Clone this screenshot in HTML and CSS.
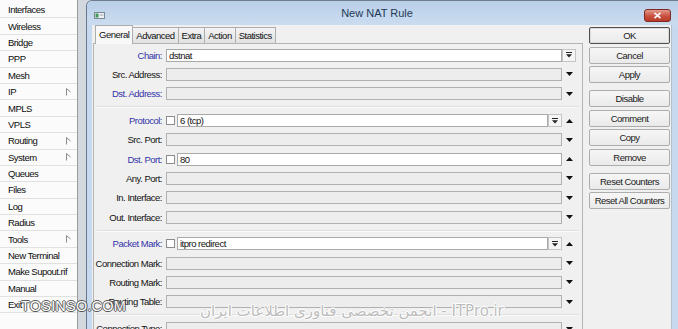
FILE: index.html
```html
<!DOCTYPE html>
<html lang="en">
<head>
<meta charset="utf-8">
<title>New NAT Rule</title>
<link rel="stylesheet" href="styles.css">
</head>
<body>
<div class="screen">
  <nav class="sidebar">
    <div class="mi">Interfaces</div>
    <div class="mi">Wireless</div>
    <div class="mi">Bridge</div>
    <div class="mi">PPP</div>
    <div class="mi">Mesh</div>
    <div class="mi">IP<svg class="subarrow" viewBox="0 0 5 8"><path d="M0.5 0.5 L0.5 7.5 M0.5 0.5 L4.5 4" fill="none" stroke="#8a8a8a" stroke-width="1"/></svg></div>
    <div class="mi">MPLS</div>
    <div class="mi">VPLS</div>
    <div class="mi">Routing<svg class="subarrow" viewBox="0 0 5 8"><path d="M0.5 0.5 L0.5 7.5 M0.5 0.5 L4.5 4" fill="none" stroke="#8a8a8a" stroke-width="1"/></svg></div>
    <div class="mi">System<svg class="subarrow" viewBox="0 0 5 8"><path d="M0.5 0.5 L0.5 7.5 M0.5 0.5 L4.5 4" fill="none" stroke="#8a8a8a" stroke-width="1"/></svg></div>
    <div class="mi">Queues</div>
    <div class="mi">Files</div>
    <div class="mi">Log</div>
    <div class="mi">Radius</div>
    <div class="mi">Tools<svg class="subarrow" viewBox="0 0 5 8"><path d="M0.5 0.5 L0.5 7.5 M0.5 0.5 L4.5 4" fill="none" stroke="#8a8a8a" stroke-width="1"/></svg></div>
    <div class="mi">New Terminal</div>
    <div class="mi">Make Supout.rif</div>
    <div class="mi">Manual</div>
    <div class="mi">Exit</div>
  </nav>
  <div class="backdrop"></div>
  <div class="window">
    <div class="titlebar">
      <div class="tleft">
        <svg class="appicon" viewBox="0 0 11 7"><rect x="0.5" y="0.5" width="10" height="6" fill="#eef1f3" stroke="#7d8a96"/><rect x="1.5" y="1.5" width="3" height="4" fill="#3f9a5c"/><rect x="5.5" y="2.5" width="4" height="1" fill="#9aa6b0"/></svg>
      </div>
      <div class="title">New NAT Rule</div>
      <div class="tright">
        <div class="close"><svg viewBox="0 0 9 7" class="closex"><path d="M1.5 0.8 L7.5 6.2 M7.5 0.8 L1.5 6.2" stroke="#fff" stroke-width="1.6" fill="none"/></svg></div>
      </div>
    </div>
    <div class="client">
      <div class="main">
        <div class="tabs">
          <div class="tab active">General</div>
          <div class="tab">Advanced</div>
          <div class="tab">Extra</div>
          <div class="tab">Action</div>
          <div class="tab">Statistics</div>
        </div>
        <div class="page">
          <div class="row">
            <div class="lbl key">Chain:</div>
            <div class="field"><div class="inp filled">dstnat</div></div>
            <div class="trail"><div class="dd"><svg class="ddi" viewBox="0 0 6 6"><rect x="0" y="0" width="6" height="1" fill="#222"/><path d="M0 2.2 L6 2.2 L3 5.6 Z" fill="#222"/></svg></div></div>
          </div>
          <div class="row">
            <div class="lbl">Src. Address:</div>
            <div class="field"><div class="inp"></div></div>
            <div class="trail"><svg class="arr" viewBox="0 0 7 4"><path d="M0 0 L7 0 L3.5 4 Z" fill="#111"/></svg></div>
          </div>
          <div class="row">
            <div class="lbl key">Dst. Address:</div>
            <div class="field"><div class="inp"></div></div>
            <div class="trail"><svg class="arr" viewBox="0 0 7 4"><path d="M0 0 L7 0 L3.5 4 Z" fill="#111"/></svg></div>
          </div>

          <div class="sep"></div>

          <div class="row">
            <div class="lbl key">Protocol:</div>
            <div class="field"><div class="chk"></div><div class="inp filled">6 (tcp)</div><div class="dd"><svg class="ddi" viewBox="0 0 6 6"><rect x="0" y="0" width="6" height="1" fill="#222"/><path d="M0 2.2 L6 2.2 L3 5.6 Z" fill="#222"/></svg></div></div>
            <div class="trail"><svg class="arr" viewBox="0 0 7 4"><path d="M0 4 L7 4 L3.5 0 Z" fill="#111"/></svg></div>
          </div>
          <div class="row">
            <div class="lbl">Src. Port:</div>
            <div class="field"><div class="inp"></div></div>
            <div class="trail"><svg class="arr" viewBox="0 0 7 4"><path d="M0 0 L7 0 L3.5 4 Z" fill="#111"/></svg></div>
          </div>
          <div class="row">
            <div class="lbl key">Dst. Port:</div>
            <div class="field"><div class="chk"></div><div class="inp filled">80</div></div>
            <div class="trail"><svg class="arr" viewBox="0 0 7 4"><path d="M0 4 L7 4 L3.5 0 Z" fill="#111"/></svg></div>
          </div>
          <div class="row">
            <div class="lbl">Any. Port:</div>
            <div class="field"><div class="inp"></div></div>
            <div class="trail"><svg class="arr" viewBox="0 0 7 4"><path d="M0 0 L7 0 L3.5 4 Z" fill="#111"/></svg></div>
          </div>
          <div class="row">
            <div class="lbl">In. Interface:</div>
            <div class="field"><div class="inp"></div></div>
            <div class="trail"><svg class="arr" viewBox="0 0 7 4"><path d="M0 0 L7 0 L3.5 4 Z" fill="#111"/></svg></div>
          </div>
          <div class="row">
            <div class="lbl">Out. Interface:</div>
            <div class="field"><div class="inp"></div></div>
            <div class="trail"><svg class="arr" viewBox="0 0 7 4"><path d="M0 0 L7 0 L3.5 4 Z" fill="#111"/></svg></div>
          </div>

          <div class="sep"></div>

          <div class="row">
            <div class="lbl key">Packet Mark:</div>
            <div class="field"><div class="chk"></div><div class="inp filled">itpro redirect</div><div class="dd"><svg class="ddi" viewBox="0 0 6 6"><rect x="0" y="0" width="6" height="1" fill="#222"/><path d="M0 2.2 L6 2.2 L3 5.6 Z" fill="#222"/></svg></div></div>
            <div class="trail"><svg class="arr" viewBox="0 0 7 4"><path d="M0 4 L7 4 L3.5 0 Z" fill="#111"/></svg></div>
          </div>
          <div class="row">
            <div class="lbl">Connection Mark:</div>
            <div class="field"><div class="inp"></div></div>
            <div class="trail"><svg class="arr" viewBox="0 0 7 4"><path d="M0 0 L7 0 L3.5 4 Z" fill="#111"/></svg></div>
          </div>
          <div class="row">
            <div class="lbl">Routing Mark:</div>
            <div class="field"><div class="inp"></div></div>
            <div class="trail"><svg class="arr" viewBox="0 0 7 4"><path d="M0 0 L7 0 L3.5 4 Z" fill="#111"/></svg></div>
          </div>
          <div class="row">
            <div class="lbl">Routing Table:</div>
            <div class="field"><div class="inp"></div></div>
            <div class="trail"><svg class="arr" viewBox="0 0 7 4"><path d="M0 0 L7 0 L3.5 4 Z" fill="#111"/></svg></div>
          </div>

          <div class="sep"></div>

          <div class="row">
            <div class="lbl">Connection Type:</div>
            <div class="field"><div class="inp"></div></div>
            <div class="trail"><svg class="arr" viewBox="0 0 7 4"><path d="M0 0 L7 0 L3.5 4 Z" fill="#111"/></svg></div>
          </div>
        </div>
      </div>
      <div class="buttons">
        <div class="btn def">OK</div>
        <div class="btn">Cancel</div>
        <div class="btn">Apply</div>
        <div class="btn gs">Disable</div>
        <div class="btn">Comment</div>
        <div class="btn">Copy</div>
        <div class="btn">Remove</div>
        <div class="btn gs">Reset Counters</div>
        <div class="btn">Reset All Counters</div>
      </div>
    </div>
  </div>
  <div class="wm wm1">TOSINSO.COM</div>
  <div class="wm wm2" lang="fa">انجمن تخصصی فناوری اطلاعات ایران - ITPro.ir</div>
</div>
</body>
</html>
```
FILE: styles.css
```css
* { box-sizing: border-box; }
html, body { margin: 0; padding: 0; }
body {
  width: 678px;
  height: 329px;
  overflow: hidden;
  font-family: "Liberation Sans", Arial, sans-serif;
  font-size: 9.5px;
  letter-spacing: -0.5px;
  color: #111;
  background: #d5dae1;
}
.screen {
  position: relative;
  display: flex;
  width: 678px;
  height: 329px;
  overflow: hidden;
}

/* sidebar menu */
.sidebar {
  flex: 0 0 78px;
  width: 78px;
  min-width: 0;
  overflow: hidden;
  background: #fbfbfb;
  border-right: 1px solid #9b9b9b;
  padding-top: 2px;
}
.mi {
  height: 16.4px;
  border-bottom: 1px solid #e1e1e1;
  padding: 0 6px 0 8px;
  display: flex;
  align-items: center;
  justify-content: space-between;
  white-space: nowrap;
  color: #0d0d0d;
}
.subarrow { width: 5px; height: 8px; flex: 0 0 5px; }
.backdrop { flex: 0 0 8px; background: #d3d8df; }

/* dialog window */
.window {
  flex: 0 0 592px;
  width: 592px;
  min-width: 0;
  overflow: hidden;
  display: flex;
  flex-direction: column;
  background: #c6d9ee;
  border-left: 1px solid #66778c;
  border-top: 1px solid #6d7c8e;
  border-radius: 6px 0 0 0;
}
.titlebar {
  height: 24px;
  flex: 0 0 24px;
  padding-top: 4px;
  display: grid;
  grid-template-columns: 1fr auto 1fr;
  background: linear-gradient(#b9d0e9, #cbdcef);
}
.tleft { display: flex; align-items: flex-start; }
.appicon { width: 11px; height: 7px; margin: 7px 0 0 7px; }
.title {
  font-family: "Liberation Sans", Arial, sans-serif;
  font-size: 11px;
  letter-spacing: 0;
  color: #1e3957;
  line-height: 16px;
  margin-right: 11px;
}
.tright { display: flex; justify-content: flex-end; align-items: flex-start; }
.close {
  width: 27px;
  height: 13px;
  margin: 4px 7px 0 0;
  border: 1px solid #7a2a22;
  border-radius: 3px;
  background: linear-gradient(#e49a8c, #c9503f 55%, #b93a2a);
  display: flex;
  align-items: center;
  justify-content: center;
}
.closex { width: 9px; height: 7px; }

.client {
  flex: 1;
  margin: 0 6px 0 5px;
  background: #f0f0f0;
  border-right: 1px solid #b3c0ce;
  display: flex;
  min-height: 0;
}
.main {
  flex: 0 0 491px;
  width: 491px;
  min-width: 0;
  padding-left: 1px;
  display: flex;
  flex-direction: column;
}

/* tabs */
.tabs {
  height: 18px;
  flex: 0 0 18px;
  display: flex;
  align-items: flex-end;
  padding-left: 2px;
}
.tab {
  height: 16px;
  padding: 0 3px;
  border: 1px solid #adadad;
  border-bottom: none;
  margin-left: -1px;
  background: linear-gradient(#f3f3f3, #e2e2e2);
  display: flex;
  align-items: center;
  white-space: nowrap;
}
.tab:first-child { margin-left: 0; }
.tab.active {
  position: relative;
  z-index: 1;
  height: 19px;
  margin-bottom: -1px;
  background: #f8f8f8;
  padding-bottom: 2px;
}

.page {
  flex: 1;
  border: 1px solid #b4b4b4;
  border-bottom: none;
  padding-top: 1.5px;
  background: #f0f0f0;
}
.row {
  display: flex;
  align-items: center;
  height: 19.3px;
}
.lbl {
  flex: 0 0 68px;
  width: 68px;
  text-align: right;
  margin-right: 4px;
  white-space: nowrap;
}
.key { color: #3333a8; }
.field {
  flex: 0 0 396px;
  width: 396px;
  height: 13px;
  display: flex;
  align-items: center;
}
.inp {
  flex: 1;
  min-width: 0;
  height: 13px;
  border: 1px solid #b1b1b1;
  background: #ededed;
  padding-left: 2px;
  line-height: 11px;
  white-space: nowrap;
  overflow: hidden;
}
.inp.filled { background: #fff; border-color: #a9a9a9; }
.chk {
  flex: 0 0 9px;
  height: 9px;
  border: 1px solid #8c8c8c;
  background: #fff;
  margin-right: 2px;
}
.dd {
  flex: 0 0 14px;
  width: 14px;
  height: 13px;
  border: 1px solid #c4c4c4;
  background: #f5f5f5;
  display: flex;
  align-items: center;
  justify-content: center;
}
.ddi { width: 6px; height: 6px; }
.trail {
  flex: 0 0 14px;
  width: 14px;
  display: flex;
  align-items: center;
  justify-content: center;
}
.arr { width: 7px; height: 4px; }
.sep {
  height: 7.5px;
  margin: 0 3px;
  background: linear-gradient(transparent 3px, #dedede 3px, #dedede 4px, #fbfbfb 4px, #fbfbfb 5px, transparent 5px);
}

/* button column */
.buttons {
  flex: 0 0 81px;
  width: 81px;
  margin-left: 6px;
  padding-top: 2px;
  display: flex;
  flex-direction: column;
  gap: 2.5px;
}
.btn {
  height: 17px;
  flex: 0 0 17px;
  border: 1px solid #adadad;
  border-radius: 2px;
  background: linear-gradient(#f6f6f6, #eaeaea);
  display: flex;
  align-items: center;
  justify-content: center;
  white-space: nowrap;
  color: #1a1a1a;
}
.btn.gs { margin-top: 4.5px; }
.btn.def { border-color: #505050; box-shadow: inset 0 0 0 1px #dadada; }

/* watermarks overlaid on the screenshot */
.wm { position: absolute; white-space: nowrap; pointer-events: none; letter-spacing: 0; }
.wm1 {
  left: 21px;
  top: 298px;
  font-family: "Liberation Sans", Arial, sans-serif;
  font-size: 14.5px;
  letter-spacing: 0.2px;
  color: #fff;
  text-shadow: 1px 0 0 #4a4a4a, -1px 0 0 #4a4a4a, 0 1px 0 #4a4a4a, 0 -1px 0 #4a4a4a;
  opacity: 0.9;
}
.wm2 {
  left: 200px;
  top: 302px;
  font-family: "DejaVu Sans", sans-serif;
  font-size: 15px;
  color: #bdbdbd;
  text-shadow: 1px 0 0 #fff, -1px 0 0 #fff, 0 1px 0 #fff, 0 -1px 0 #fff;
}
```
